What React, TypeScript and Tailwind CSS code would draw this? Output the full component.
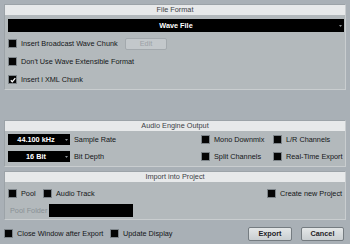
import React from "react";

function Box({ checked = false }: { checked?: boolean }) {
  return (
    <div className="w-[7px] h-[7px] bg-[#050505] shadow-[0_0_0_1px_#7d8489] flex items-center justify-center shrink-0">
      {checked && (
        <svg width="6" height="6" viewBox="0 0 6 6">
          <path d="M0.8 3.2 L2.3 4.7 L5.3 1.2" stroke="#ffffff" strokeWidth="1.3" fill="none" />
        </svg>
      )}
    </div>
  );
}

function Check({ label, checked = false, disabled = false }: { label: string; checked?: boolean; disabled?: boolean }) {
  return (
    <div className="flex items-center gap-[5px]">
      <Box checked={checked} />
      <span className={disabled ? "text-[#8d9499]" : "text-[#141618]"}>{label}</span>
    </div>
  );
}

function Arrow() {
  return (
    <svg width="3" height="2" viewBox="0 0 3 2" className="absolute right-[2px] top-1/2 -translate-y-1/2">
      <path d="M0 0 H3 L1.5 2 Z" fill="#8c9296" />
    </svg>
  );
}

function Header({ title }: { title: string }) {
  return (
    <div className="h-[10px] bg-[#e7e9ea] flex items-center justify-center text-[#3c4146] leading-none">
      {title}
    </div>
  );
}

export default function App() {
  return (
    <div
      className="w-[350px] h-[244px] bg-[#a9b0b6] flex flex-col px-[4px] pt-[4px] text-[7.3px] leading-none overflow-hidden"
      style={{ fontFamily: '"Liberation Sans", Arial, sans-serif' }}
    >
      {/* File Format */}
      <div className="h-[86px] bg-[#b3b9bc] border border-t-[#9ca3a8] border-l-[#9ca3a8] border-r-[#c9cdcf] border-b-[#c9cdcf] flex flex-col">
        <Header title="File Format" />
        <div className="ml-[3px] mr-[1px] mt-[4px] h-[13px] bg-black relative flex items-center justify-center text-white font-bold">
          Wave File
          <Arrow />
        </div>
        <div className="ml-[4px] mt-[6px] h-[12px] flex items-center">
          <div className="w-[116px]">
            <Check label="Insert Broadcast Wave Chunk" />
          </div>
          <div className="w-[42px] h-[12px] rounded-[2px] bg-[#c3c8cb] border border-[#a3a9ad] flex items-center justify-center text-[#9ba1a6]">
            Edit
          </div>
        </div>
        <div className="ml-[4px] mt-[6px] h-[12px] flex items-center">
          <Check label="Don't Use Wave Extensible Format" />
        </div>
        <div className="ml-[4px] mt-[6px] h-[12px] flex items-center">
          <Check label="Insert i XML Chunk" checked />
        </div>
      </div>

      {/* Audio Engine Output */}
      <div className="mt-[30px] h-[47px] bg-[#b3b9bc] border border-t-[#9ca3a8] border-l-[#9ca3a8] border-r-[#c9cdcf] border-b-[#c9cdcf] flex flex-col">
        <Header title="Audio Engine Output" />
        <div className="ml-[3px] mt-[3px] h-[11px] flex items-center">
          <div className="w-[62px] h-[11px] bg-black relative flex items-center justify-center text-white font-bold pr-[6px]">
            44.100 kHz
            <Arrow />
          </div>
          <span className="ml-[4px] w-[128px] text-[#141618]">Sample Rate</span>
          <div className="w-[72px]">
            <Check label="Mono Downmix" />
          </div>
          <Check label="L/R Channels" />
        </div>
        <div className="ml-[3px] mt-[6px] h-[11px] flex items-center">
          <div className="w-[62px] h-[11px] bg-black relative flex items-center justify-center text-white font-bold pr-[6px]">
            16 Bit
            <Arrow />
          </div>
          <span className="ml-[4px] w-[128px] text-[#141618]">Bit Depth</span>
          <div className="w-[72px]">
            <Check label="Split Channels" />
          </div>
          <Check label="Real-Time Export" />
        </div>
      </div>

      {/* Import into Project */}
      <div className="mt-[4px] h-[49px] bg-[#b3b9bc] border border-t-[#9ca3a8] border-l-[#9ca3a8] border-r-[#c9cdcf] border-b-[#c9cdcf] flex flex-col">
        <Header title="Import into Project" />
        <div className="ml-[4px] mt-[6px] h-[12px] flex items-center">
          <div className="w-[35px]">
            <Check label="Pool" />
          </div>
          <div className="w-[224px]">
            <Check label="Audio Track" />
          </div>
          <Check label="Create new Project" />
        </div>
        <div className="ml-[5px] mt-[4px] h-[13px] flex items-center">
          <span className="w-[39px] text-[#8a9196]">Pool Folder</span>
          <div className="w-[84px] h-[13px] bg-black" />
        </div>
      </div>

      {/* Bottom */}
      <div className="mt-[7px] h-[14px] flex items-center pl-[1px] pr-[2px]">
        <div className="w-[106px]">
          <Check label="Close Window after Export" />
        </div>
        <Check label="Update Display" />
        <div className="ml-auto flex gap-[9px]">
          <div className="w-[44px] h-[14px] rounded-[2px] bg-gradient-to-b from-[#e4e7e8] to-[#c9ced1] border border-[#757c81] flex items-center justify-center font-bold text-[#1e2226]">
            Export
          </div>
          <div className="w-[43px] h-[14px] rounded-[2px] bg-gradient-to-b from-[#e4e7e8] to-[#c9ced1] border border-[#757c81] flex items-center justify-center font-bold text-[#1e2226]">
            Cancel
          </div>
        </div>
      </div>
    </div>
  );
}
